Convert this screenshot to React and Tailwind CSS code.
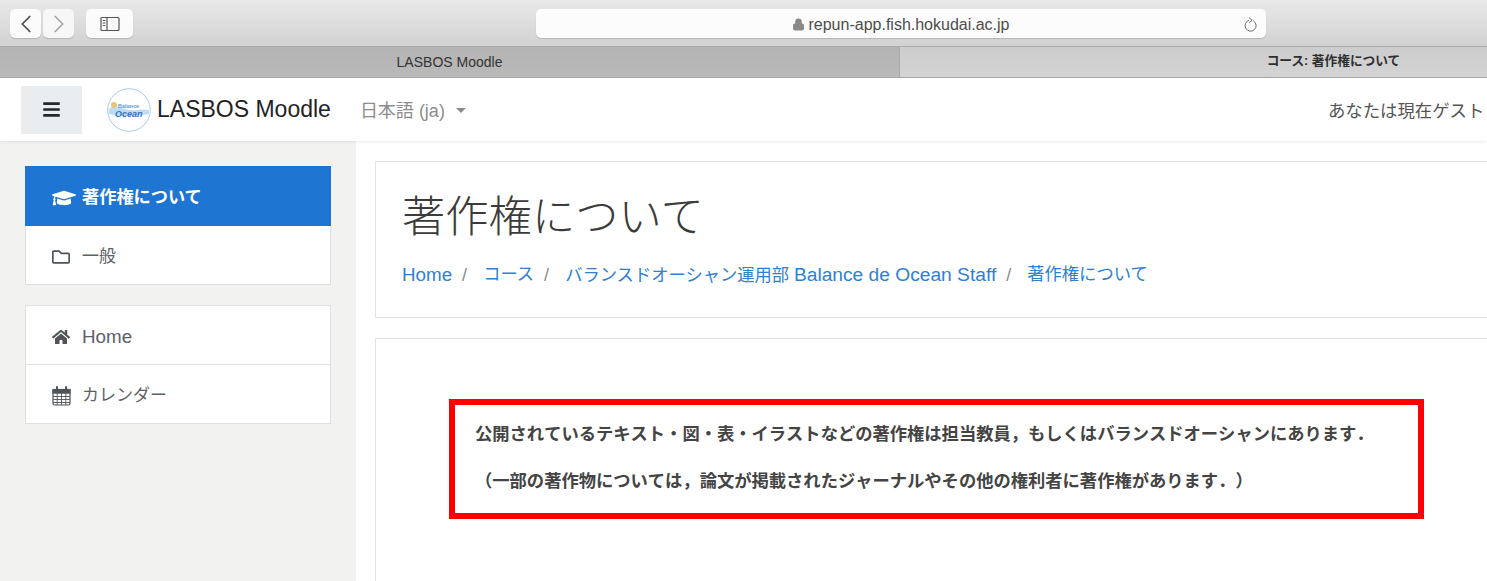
import { ChevronLeft, ChevronRight, Lock } from 'lucide-react';
import { FaBars, FaGraduationCap, FaHome, FaRegFolder } from 'react-icons/fa';

const fontStack = { fontFamily: '"Liberation Sans", "Noto Sans CJK JP", sans-serif' };

function CalendarIcon() {
  return (
    <svg width="19" height="20" viewBox="0 0 19 20" fill="none" stroke="currentColor" strokeWidth="1.2">
      <rect x="1" y="3.5" width="17" height="15.5" rx="1.5" />
      <rect x="1" y="3.5" width="17" height="3.6" fill="currentColor" />
      <path d="M1 10.5 H18 M1 13.5 H18 M1 16.5 H18 M5.2 7 V19 M9.5 7 V19 M13.8 7 V19" strokeWidth="0.9" />
      <path d="M5 1 V5 M14 1 V5" strokeWidth="2" strokeLinecap="round" />
    </svg>
  );
}

function NavRow({ icon: Icon, label, labelClass, className }) {
  return (
    <div className={`flex items-center pl-[25px] pt-[4px] text-[17px] text-[#5b6167] ${className}`}>
      <span className="flex w-[20px] justify-center text-[18px] text-[#4f5459]">
        <Icon />
      </span>
      <span className={`ml-[11px] ${labelClass}`}>{label}</span>
    </div>
  );
}

function Logo() {
  return (
    <svg width="44" height="44" viewBox="0 0 44 44" className="shrink-0">
      <circle cx="22" cy="22" r="21.3" fill="#fff" stroke="#a9cdea" strokeWidth="1" />
      <path d="M2 21 C8 16 12 19 18 21 C26 24 34 20 42 22 L42 26 C30 28 14 29 2 26 Z" fill="#bcdcf3" />
      <circle cx="7" cy="17" r="3" fill="#e8c476" />
      <text x="11" y="20" fontSize="5.5" fontWeight="700" fill="#5b9bd5">Balance</text>
      <text x="8" y="29" fontSize="9" fontWeight="700" fontStyle="italic" fill="#3a74b8">Ocean</text>
    </svg>
  );
}

function Slash() {
  return <span className="ml-[10px] mr-[16px] text-[18px] text-[#8b8b8b]">/</span>;
}

export default function App() {
  return (
    <div className="flex h-[581px] w-[1487px] flex-col overflow-hidden bg-white" style={fontStack}>
      <div className="flex h-[47px] shrink-0 items-start border-b border-[#ababab] bg-gradient-to-b from-[#e9e9e9] to-[#d2d2d2] pl-[10px] pt-[9px]">
        <div className="flex h-[29px] w-[31px] items-center justify-center rounded-[5px] bg-[#fbfbfb] text-[#4a4a4a] shadow-[0_1px_1px_#b5b5b5]">
          <ChevronLeft size={30} strokeWidth={1.4} />
        </div>
        <div className="ml-[2px] flex h-[29px] w-[31px] items-center justify-center rounded-[5px] bg-[#f7f7f7] text-[#a3a3a3] shadow-[0_1px_1px_#b5b5b5]">
          <ChevronRight size={30} strokeWidth={1.4} />
        </div>
        <div className="ml-[12px] flex h-[29px] w-[47px] items-center justify-center rounded-[5px] bg-[#fbfbfb] shadow-[0_1px_1px_#b5b5b5]">
          <svg width="20" height="16" viewBox="0 0 20 16" fill="none" stroke="#555" strokeWidth="1.2">
            <rect x="1" y="1.5" width="18" height="13" rx="1" />
            <path d="M7 1.5 V14.5" />
            <path d="M2.7 4.5 H5.3 M2.7 7 H5.3 M2.7 9.5 H5.3" />
          </svg>
        </div>
        <div className="relative ml-[403px] flex h-[29px] w-[730px] items-center justify-center rounded-[5px] bg-[#fcfcfc] pt-[2px] text-[16px] text-[#4d4d4d] shadow-[0_1px_1px_#b5b5b5]">
          <Lock size={13} className="mr-[3px] fill-[#8a8a8a] text-[#8a8a8a]" />
          <span>repun-app.fish.hokudai.ac.jp</span>
          <svg width="14" height="18" viewBox="0 0 14 18" fill="none" stroke="#6a6a6a" strokeWidth="1" className="absolute right-[8px]">
            <path d="M9.5 5 A5.5 5.5 0 1 1 5 4.4" />
            <path d="M5 1.5 L8 4.3 L5 6.8" />
          </svg>
        </div>
      </div>

      <div className="flex h-[31px] shrink-0 overflow-hidden border-b border-[#a8a8a8] text-[#333]">
        <div className="flex w-[900px] shrink-0 items-center justify-center border-r border-[#a9a9a9] bg-gradient-to-b from-[#b4b4b4] to-[#b9b9b9] text-[14px]">
          LASBOS Moodle
        </div>
        <div className="flex w-[867px] shrink-0 items-center justify-center whitespace-nowrap bg-gradient-to-b from-[#cdcdcd] to-[#d3d3d3] text-[12.7px] font-bold text-[#2e2e2e]">
          コース: 著作権について
        </div>
      </div>

      <div className="z-10 flex h-[63px] shrink-0 items-center overflow-hidden bg-white pl-[21px] shadow-[0_1px_3px_rgba(0,0,0,0.08)]">
        <div className="flex h-[48px] w-[61px] shrink-0 items-center justify-center bg-[#e9edf0] text-[19px] text-[#23282d]">
          <FaBars />
        </div>
        <div className="ml-[25px]">
          <Logo />
        </div>
        <span className="ml-[6px] shrink-0 text-[23px] text-[#1f2326]">LASBOS Moodle</span>
        <span className="ml-[29px] mt-[4px] shrink-0 text-[18px] text-[#8d8d8d]">日本語 (ja)</span>
        <span className="ml-[11px] mt-[2px] h-0 w-0 shrink-0 border-x-[5px] border-t-[5px] border-x-transparent border-t-[#8d8d8d]" />
        <span className="ml-[862px] mt-[4px] shrink-0 whitespace-nowrap text-[17.4px] text-[#555]">あなたは現在ゲストとして</span>
      </div>

      <div className="flex min-h-0 flex-1">
        <aside className="flex w-[356px] shrink-0 flex-col gap-[20px] bg-[#f2f2f1] pl-[25px] pr-[25px] pt-[25px]">
          <div className="border border-[#e0e0e0] border-t-0 bg-white">
            <div className="-mx-px flex h-[60px] items-center bg-[#1e75d2] pl-[26px] pt-[4px] text-[17.2px] font-bold text-white">
              <span className="flex w-[25px] shrink-0 justify-center text-[24px]">
                <FaGraduationCap />
              </span>
              <span className="ml-[6px]">著作権について</span>
            </div>
            <NavRow icon={FaRegFolder} label="一般" className="h-[58px]" />
          </div>
          <div className="border border-[#e0e0e0] bg-white">
            <NavRow icon={FaHome} label="Home" labelClass="text-[18.8px]" className="h-[59px] border-b border-[#e0e0e0]" />
            <NavRow icon={CalendarIcon} label="カレンダー" className="h-[58px]" />
          </div>
        </aside>

        <main className="flex min-w-0 flex-1 flex-col gap-[20px] overflow-hidden bg-white pl-[19px] pt-[20px]">
          <div className="h-[157px] w-[1200px] shrink-0 border border-[#e3e3e3] pl-[26px] pt-[25px]">
            <h1 className="text-[43.3px] leading-[60px] font-light text-[#3b3b3b]">著作権について</h1>
            <div className="mt-[14px] flex items-center whitespace-nowrap text-[17.3px] text-[#2f7fd3]">
              <span className="text-[18.8px]">Home</span>
              <Slash />
              <span>コース</span>
              <Slash />
              <span>バランスドオーシャン運用部 <span className="text-[19.2px]">Balance de Ocean Staff</span></span>
              <Slash />
              <span>著作権について</span>
            </div>
          </div>
          <div className="h-[300px] w-[1200px] shrink-0 border border-[#e3e3e3] pl-[73px] pt-[60px]">
            <div className="flex h-[120px] w-[975px] flex-col gap-[23px] border-[6px] border-[#ff0000] pl-[20px] pt-[17px] text-[17.3px] leading-[24px] font-bold whitespace-nowrap text-[#444] [text-spacing-trim:space-all] [font-kerning:none]">
              <p>公開されているテキスト・図・表・イラストなどの著作権は担当教員，もしくはバランスドオーシャンにあります．</p>
              <p>（一部の著作物については，論文が掲載されたジャーナルやその他の権利者に著作権があります．）</p>
            </div>
          </div>
        </main>
      </div>
    </div>
  );
}
